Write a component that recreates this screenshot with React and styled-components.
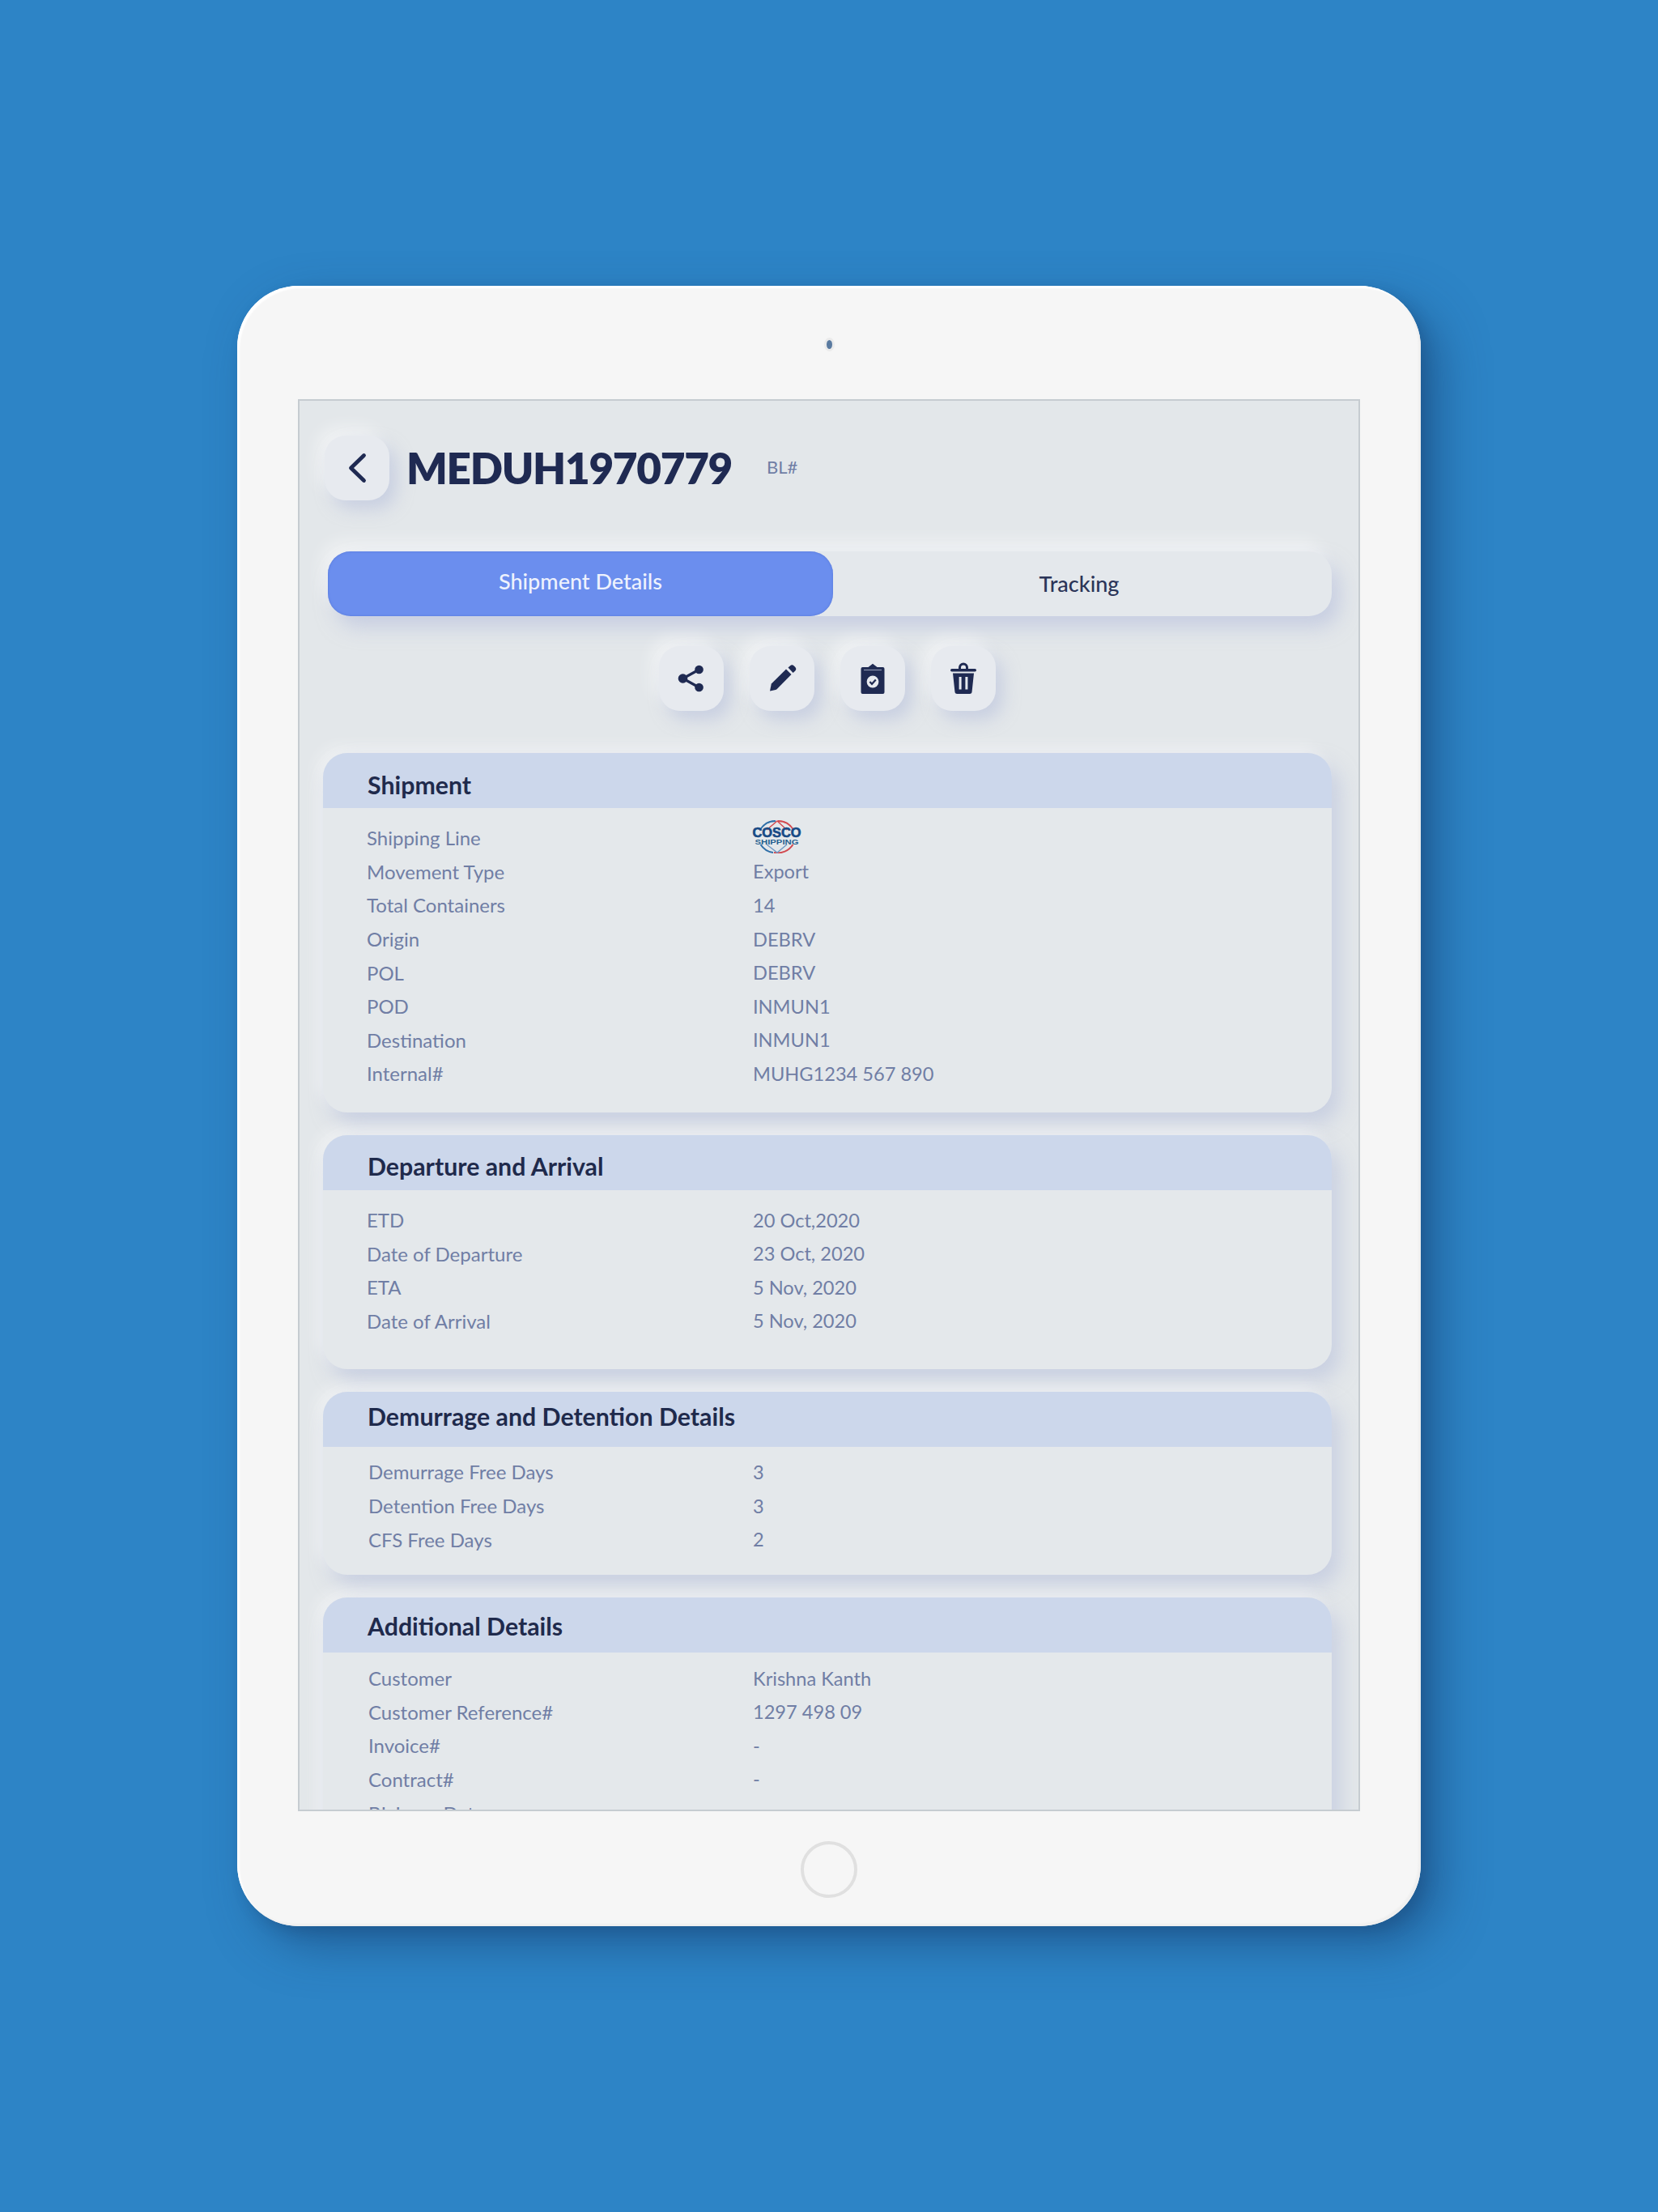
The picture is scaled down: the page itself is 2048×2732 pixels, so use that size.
import React from "react";
import styled, { createGlobalStyle } from "styled-components";

const Global = createGlobalStyle`
  html, body { margin: 0; padding: 0; background: #2d84c6; }
  body { font-family: "Lato", "Open Sans", sans-serif; }
`;

const Page = styled.main`
  width: 2048px;
  height: 2732px;
  display: flex;
  align-items: center;
  justify-content: center;
  background: #2d84c6;
  overflow: hidden;
`;

const Device = styled.div`
  width: 1462px;
  height: 2026px;
  box-sizing: border-box;
  background: #f6f6f6;
  border-radius: 76px;
  display: flex;
  flex-direction: column;
  align-items: center;
  box-shadow: 24px 24px 56px rgba(22, 62, 110, 0.5), 8px 8px 16px rgba(22, 62, 110, 0.25),
    inset 3px 3px 2px #ffffff, inset -3px -3px 2px #efefef;
`;

const TopBezel = styled.div`
  height: 140px;
  width: 100%;
  display: flex;
  align-items: center;
  justify-content: center;
`;

const Camera = styled.span`
  width: 7px;
  height: 11px;
  margin-top: 4px;
  border-radius: 50%;
  background: #5a7aa0;
  box-shadow: 0 0 0 3px #ebebeb;
`;

const BottomBezel = styled.div`
  flex: 1;
  width: 100%;
  display: flex;
  align-items: center;
  justify-content: center;
`;

const HomeButton = styled.span`
  width: 70px;
  height: 70px;
  box-sizing: border-box;
  border-radius: 50%;
  border: 4px solid #e0e0e0;
  margin-top: 2px;
`;

const Screen = styled.div`
  width: 1312px;
  height: 1744px;
  flex: none;
  box-sizing: border-box;
  border: 2px solid #c6ccd1;
  background: #e3e7ea;
  overflow: hidden;
  padding: 43px 33px 0 29px;
`;

const TitleRow = styled.header`
  display: flex;
  align-items: center;
  height: 80px;
  margin-left: 2px;
`;

const Raised = styled.button`
  width: 80px;
  height: 80px;
  flex: none;
  padding: 0;
  border: 0;
  border-radius: 26px;
  background: #e7eaef;
  display: flex;
  align-items: center;
  justify-content: center;
  box-shadow: 9px 11px 20px rgba(176, 186, 218, 0.5), -9px -10px 20px rgba(255, 255, 255, 0.5);
`;

const Title = styled.h1`
  margin: 0 0 0 21px;
  font-size: 53px;
  line-height: 80px;
  font-weight: 800;
  letter-spacing: -1.3px;
  color: #1f2a52;
`;

const Tag = styled.span`
  margin-left: 43px;
  margin-top: -3px;
  font-size: 22px;
  color: #707ea5;
`;

const Tabs = styled.div`
  display: grid;
  grid-template-columns: 624px 1fr;
  height: 80px;
  margin: 63px 0 0 6px;
  border-radius: 28px;
  background: #e4e8ec;
  box-shadow: 10px 14px 24px rgba(176, 186, 218, 0.55), -8px -12px 20px rgba(255, 255, 255, 0.5);
`;

const Tab = styled.div`
  display: flex;
  align-items: center;
  justify-content: center;
  font-size: 27px;
  font-weight: 500;
  border-radius: 28px;
  color: ${(p) => (p.$active ? "#eef2fd" : "#2b3558")};
  background: ${(p) => (p.$active ? "#6b8eee" : "transparent")};
  padding: ${(p) => (p.$active ? "0 0 7px" : "0 8px 2px 0")};
  box-sizing: border-box;
  box-shadow: ${(p) => (p.$active ? "inset 0 0 3px #5577d8" : "none")};
`;

const Actions = styled.div`
  display: flex;
  justify-content: center;
  gap: 32px;
  margin-top: 37px;
  margin-bottom: 52px;
`;

const Card = styled.section`
  border-radius: 30px;
  background: #e4e8eb;
  overflow: visible;
  padding-bottom: ${(p) => p.$bottom}px;
  margin-bottom: 28px;
  box-shadow: 10px 14px 24px rgba(176, 186, 218, 0.5), -8px -8px 18px rgba(255, 255, 255, 0.45);
`;

const CardHead = styled.h2`
  margin: 0;
  height: 68px;
  box-sizing: border-box;
  padding: ${(p) => p.$nudge}px 0 ${(p) => p.$lift}px 55px;
  display: flex;
  align-items: center;
  font-size: 30.3px;
  font-weight: 700;
  color: #1f2a4c;
  background: #ccd7eb;
  border-radius: 30px 30px 0 0;
`;

const CardBody = styled.div`
  padding: ${(p) => p.$top}px 0 0 ${(p) => p.$inset}px;
`;

const Row = styled.div`
  display: grid;
  grid-template-columns: ${(p) => 477 - (p.$inset - 54)}px 1fr;
  height: 41.6px;
  align-items: center;
  font-size: 24px;
  color: #707ea5;
`;

const Label = styled.span`
  white-space: nowrap;
`;

const Value = styled.span`
  white-space: nowrap;
  font-size: 23.6px;
`;

const Icon = styled.svg`
  display: block;
  flex: none;
  color: #1f2a52;
`;

const Logo = styled.svg`
  display: block;
  width: 61px;
  height: 41px;
  margin: -2px 0 0 -1px;
`;

const Back = () => (
  <Icon width="40" height="40" viewBox="0 0 40 40" fill="none">
    <path d="M28.5 4.5 L12.5 20 L28.5 35.5" stroke="currentColor" strokeWidth="4.8" strokeLinecap="round" strokeLinejoin="round" />
  </Icon>
);

const Share = () => (
  <Icon width="40" height="40" viewBox="0 0 40 40" fill="currentColor">
    <path d="M29.5 9 L9.5 20 L29.5 31" fill="none" stroke="currentColor" strokeWidth="3.2" />
    <circle cx="29.5" cy="9" r="5.3" />
    <circle cx="9.5" cy="20" r="5.8" />
    <circle cx="29.5" cy="31" r="5.3" />
  </Icon>
);

const Pencil = () => (
  <Icon width="40" height="40" viewBox="0 0 40 40" fill="currentColor">
    <path d="M5 35.5 L6.8 26.5 L25 8.5 L31.5 15 L13.5 33.2 Q12.8 33.8 12 34 Z" />
    <path d="M27.5 6.5 L29.8 4.4 a3.6 3.6 0 0 1 5 0 l1.3 1.3 a3.6 3.6 0 0 1 0 5 L33.6 13 Z" />
  </Icon>
);

const Clipboard = () => (
  <Icon width="40" height="40" viewBox="0 0 40 40" fill="currentColor">
    <path d="M7.5 6 H14.5 L20 1.8 L25.5 6 H32.5 a2 2 0 0 1 2 2 V37 a2 2 0 0 1 -2 2 H7.5 a2 2 0 0 1 -2 -2 V8 a2 2 0 0 1 2 -2 Z" />
    <path d="M9 9.5 H31" stroke="#8c95b0" strokeWidth="1.2" />
    <circle cx="20" cy="24" r="7.4" fill="#e7eaef" />
    <path d="M16.4 24 L19 26.8 L23.8 21.4" fill="none" stroke="currentColor" strokeWidth="2.2" />
  </Icon>
);

const Trash = () => (
  <Icon width="40" height="40" viewBox="0 0 40 40" fill="currentColor">
    <path d="M15.5 8 V6.5 a4.5 4.5 0 0 1 9 0 V8" fill="none" stroke="currentColor" strokeWidth="3" />
    <rect x="4" y="8" width="32" height="3.4" rx="1.7" />
    <path d="M7 13.5 H33 L30.6 36 a3 3 0 0 1 -3 3 H12.4 a3 3 0 0 1 -3 -3 Z" />
    <rect x="14.6" y="18" width="3" height="15.5" fill="#e7eaef" />
    <rect x="22.4" y="18" width="3" height="15.5" fill="#e7eaef" />
  </Icon>
);

const CoscoLogo = () => (
  <Logo viewBox="0 0 61 41" aria-label="COSCO Shipping">
    <path d="M10.5 11 A22 21 0 0 1 29 1" fill="none" stroke="#2f6fa8" strokeWidth="2" />
    <path d="M32 1 A22 21 0 0 1 50.5 11" fill="none" stroke="#d24a50" strokeWidth="2" />
    <path d="M10.5 30 A22 21 0 0 0 26 40" fill="none" stroke="#2f6fa8" strokeWidth="2" />
    <path d="M27 40 A22 21 0 0 0 50.5 30" fill="none" stroke="#d24a50" strokeWidth="2" />
    <path d="M18 12 L31 1 L43 12" fill="none" stroke="#d24a50" strokeWidth="1.4" />
    <path d="M18 30 L31 40 L43 30" fill="none" stroke="#6f98c4" strokeWidth="1.4" />
    <text x="30.5" y="20.5" textAnchor="middle" fontFamily="Liberation Sans, sans-serif" fontWeight="700" fontSize="16" textLength="60" lengthAdjust="spacingAndGlyphs" fill="#174a85" stroke="#174a85" strokeWidth="0.6">COSCO</text>
    <text x="30.5" y="29.5" textAnchor="middle" fontFamily="Liberation Sans, sans-serif" fontWeight="700" fontSize="8.5" textLength="54" lengthAdjust="spacingAndGlyphs" fill="#24608f">SHIPPING</text>
  </Logo>
);

const sections = [
  {
    title: "Shipment", nudge: 9, lift: 0, top: 16, bottom: 27, inset: 54,
    rows: [
      ["Shipping Line", <CoscoLogo key="logo" />],
      ["Movement Type", "Export"],
      ["Total Containers", "14"],
      ["Origin", "DEBRV"],
      ["POL", "DEBRV"],
      ["POD", "INMUN1"],
      ["Destination", "INMUN1"],
      ["Internal#", "MUHG1234 567 890"],
    ],
  },
  {
    title: "Departure and Arrival", nudge: 9, lift: 0, top: 16, bottom: 39, inset: 54,
    rows: [
      ["ETD", "20 Oct,2020"],
      ["Date of Departure", "23 Oct, 2020"],
      ["ETA", "5 Nov, 2020"],
      ["Date of Arrival", "5 Nov, 2020"],
    ],
  },
  {
    title: "Demurrage and Detention Details", nudge: 0, lift: 8, top: 10, bottom: 23, inset: 56,
    rows: [
      ["Demurrage Free Days", "3"],
      ["Detention Free Days", "3"],
      ["CFS Free Days", "2"],
    ],
  },
  {
    title: "Additional Details", nudge: 2, lift: 0, top: 11, bottom: 30, inset: 56,
    rows: [
      ["Customer", "Krishna Kanth"],
      ["Customer Reference#", "1297 498 09"],
      ["Invoice#", "-"],
      ["Contract#", "-"],
      ["BL Issue Date", "-"],
    ],
  },
];

export default function App() {
  return (
    <Page>
      <Global />
      <Device>
        <TopBezel>
          <Camera />
        </TopBezel>
        <Screen>
          <TitleRow>
            <Raised aria-label="Back"><Back /></Raised>
            <Title>MEDUH1970779</Title>
            <Tag>BL#</Tag>
          </TitleRow>
          <Tabs>
            <Tab $active>Shipment Details</Tab>
            <Tab>Tracking</Tab>
          </Tabs>
          <Actions>
            <Raised aria-label="Share"><Share /></Raised>
            <Raised aria-label="Edit"><Pencil /></Raised>
            <Raised aria-label="Approve"><Clipboard /></Raised>
            <Raised aria-label="Delete"><Trash /></Raised>
          </Actions>
          {sections.map((s) => (
            <Card key={s.title} $bottom={s.bottom}>
              <CardHead $nudge={s.nudge} $lift={s.lift}>{s.title}</CardHead>
              <CardBody $top={s.top} $inset={s.inset}>
                {s.rows.map(([label, value]) => (
                  <Row key={label} $inset={s.inset}>
                    <Label>{label}</Label>
                    <Value>{value}</Value>
                  </Row>
                ))}
              </CardBody>
            </Card>
          ))}
        </Screen>
        <BottomBezel>
          <HomeButton />
        </BottomBezel>
      </Device>
    </Page>
  );
}
